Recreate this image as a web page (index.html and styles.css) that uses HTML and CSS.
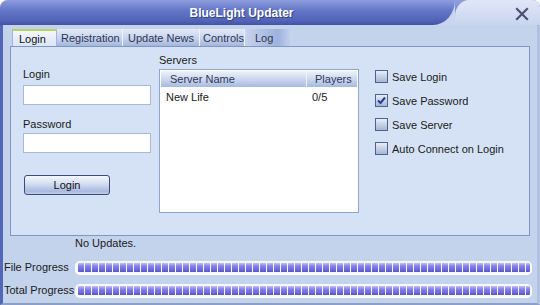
FILE: index.html
```html
<!DOCTYPE html>
<html lang="en">
<head>
  <meta charset="UTF-8">
  <meta name="viewport" content="width=device-width, initial-scale=1.0">
  <title>BlueLight Updater</title>
  <link rel="stylesheet" href="styles.css">
</head>
<body>
  <div class="window">
    <div class="titlebar">
      <div class="title">BlueLight Updater</div>
      <div class="caption">
        <div class="caption-inner">
          <span class="close">
            <svg width="14" height="14" viewBox="0 0 14 14">
              <path d="M2 2 L12 12 M12 2 L2 12" stroke="#4b5272" stroke-width="2.2" stroke-linecap="square" fill="none"/>
            </svg>
          </span>
        </div>
      </div>
    </div>

    <div class="frame">
      <div class="main">
        <div class="tabs">
          <span class="tab active">Login</span>
          <span class="tab tab-reg">Registration</span>
          <span class="tab tab-news">Update News</span>
          <span class="tab tab-ctrl">Controls</span>
          <span class="tab last">Log</span>
        </div>

        <div class="panel">
          <div class="col-login">
            <label class="lbl">Login</label>
            <input type="text" class="field">
            <label class="lbl lbl-pass">Password</label>
            <input type="password" class="field field-pass">
            <button class="btn">Login</button>
          </div>

          <div class="col-servers">
            <div class="lbl">Servers</div>
            <div class="list">
              <div class="list-head">
                <span class="c-name">Server Name</span>
                <span class="c-players">Players</span>
              </div>
              <div class="list-row">
                <span class="c-name">New Life</span>
                <span class="c-players">0/5</span>
              </div>
            </div>
          </div>

          <div class="col-options">
            <div class="opt"><span class="box"></span>Save Login</div>
            <div class="opt">
              <span class="box">
                <svg width="11" height="11" viewBox="0 0 11 11">
                  <path d="M2 5.5 L4.5 8 L9 2.5" stroke="#22418c" stroke-width="2" fill="none"/>
                </svg>
              </span>Save Password
            </div>
            <div class="opt"><span class="box"></span>Save Server</div>
            <div class="opt"><span class="box"></span>Auto Connect on Login</div>
          </div>
        </div>
      </div>

      <div class="status">No Updates.</div>

      <div class="progress">
        <div class="progress-row">
          <span class="p-label">File Progress</span>
          <div class="bar"><div class="fill"></div></div>
        </div>
        <div class="progress-row">
          <span class="p-label">Total Progress</span>
          <div class="bar"><div class="fill"></div></div>
        </div>
      </div>
    </div>
  </div>
</body>
</html>
```

FILE: styles.css
```css
* {
  box-sizing: border-box;
}

body {
  margin: 0;
  background: #fff;
  font-family: 'Liberation Sans', Arial, sans-serif;
  font-size: 11px;
  color: #1a1a1a;
}

.window {
  width: 540px;
  height: 305px;
  display: flex;
  flex-direction: column;
  background: #c4d3ec;
  border-radius: 8px 8px 0 0;
  overflow: hidden;
}

/* title bar */
.titlebar {
  display: flex;
  height: 25px;
  background: #c9d4ef;
}

.title {
  flex: 1;
  display: flex;
  align-items: center;
  justify-content: center;
  padding-left: 28px;
  background: linear-gradient(#8e9ddd, #6677c8 40%, #5062b7 85%, #42529f);
  border-bottom-right-radius: 22px 25px;
  color: #fff;
  font-weight: bold;
  font-size: 12px;
  text-shadow: 1px 1px 0 #33428c;
}

.caption {
  width: 85px;
  background: linear-gradient(#8e9ddd, #6677c8);
}

.caption-inner {
  height: 100%;
  display: flex;
  align-items: center;
  justify-content: flex-end;
  padding-right: 11px;
  background: linear-gradient(#e0e7f7, #c9d4ef);
  border-top-left-radius: 14px 16px;
}

.close {
  display: flex;
  margin-top: 2px;
}

/* body */
.frame {
  flex: 1;
  display: flex;
  flex-direction: column;
  border-left: 3px solid #5367b8;
  border-right: 3px solid #b1c0e0;
  border-bottom: 2px solid #8c9fcb;
}

.main {
  padding: 4px 7px 0 7px;
}

.tabs {
  display: flex;
  height: 17px;
  padding-left: 2px;
}

.tab {
  display: flex;
  align-items: center;
  padding: 0 0 0 4px;
  background: linear-gradient(#e3eaf7, #c6d3ee 55%, #a3b6dd);
  border-right: 1px solid #eef2fa;
  color: #2c3550;
  white-space: nowrap;
  overflow: hidden;
}

.tab.active {
  width: 45px;
  padding-left: 6px;
  background: linear-gradient(#f3f6fc, #dbe5f6);
  border-top: 2px solid #b4d45c;
  border-left: 1px solid #a3b5d8;
  border-right: 1px solid #a3b5d8;
  color: #111;
}

.tab-reg {
  width: 66px;
}

.tab-news {
  width: 77px;
  padding-left: 5px;
}

.tab-ctrl {
  width: 45px;
  padding-left: 3px;
}

.tab.last {
  width: 47px;
  padding-left: 10px;
  border-right: 0;
  background: linear-gradient(to right, #c7d3ee, #9fb2dc 70%, #c9d5ef);
}

.panel {
  height: 190px;
  display: flex;
  background: #d5e2f5;
  border: 1px solid #7f97c2;
}

.lbl {
  display: block;
  line-height: 13px;
}

.col-login {
  width: 128px;
  margin-left: 12px;
  padding-top: 21px;
  display: flex;
  flex-direction: column;
  align-items: flex-start;
}

.field {
  width: 128px;
  height: 20px;
  margin: 4px 0 0;
  border: 1px solid #a9bad9;
  background: #fff;
}

.lbl-pass {
  margin-top: 13px;
}

.field-pass {
  margin-top: 2px;
}

.btn {
  width: 86px;
  height: 20px;
  margin: 22px 0 0 1px;
  padding: 0;
  border: 1px solid #3e4b78;
  border-radius: 3px;
  background: linear-gradient(#f4f7fc, #d3ddf1 45%, #a8b9e0 85%, #c2cfec);
  font-family: inherit;
  font-size: 11px;
  color: #111;
}

.col-servers {
  width: 200px;
  margin-left: 8px;
  padding-top: 7px;
}

.list {
  height: 144px;
  margin-top: 2px;
  padding: 1px;
  background: #fff;
  border: 1px solid #8fa6cc;
}

.list-head,
.list-row {
  display: flex;
}

.list-head {
  height: 16px;
  align-items: center;
  background: linear-gradient(#eef2fa, #c5d2ed 60%, #a6badf);
  color: #2e3954;
}

.c-name {
  flex: 1;
  padding-left: 9px;
}

.c-players {
  width: 51px;
  padding-left: 8px;
}

.list-head .c-players {
  border-left: 1px solid #eef2fa;
  height: 100%;
  display: flex;
  align-items: center;
}

.list-row {
  margin-top: 4px;
  line-height: 13px;
}

.list-row .c-name {
  padding-left: 5px;
}

.list-row .c-players {
  padding-left: 6px;
}

.col-options {
  margin-left: 16px;
  padding-top: 23px;
  display: flex;
  flex-direction: column;
  gap: 11px;
}

.opt {
  display: flex;
  align-items: center;
  gap: 4px;
  height: 13px;
}

.box {
  width: 13px;
  height: 13px;
  display: flex;
  align-items: center;
  justify-content: center;
  border: 1px solid #4a6391;
  background: linear-gradient(#e9eef7, #c3cee3 55%, #a9b7d3);
}

/* status and progress */
.status {
  padding-left: 72px;
  padding-top: 1px;
  line-height: 13px;
}

.progress {
  display: flex;
  flex-direction: column;
  gap: 9px;
  padding: 10px 5px 0 0;
}

.progress-row {
  display: flex;
  align-items: center;
  height: 14px;
}

.p-label {
  width: 72px;
  padding-left: 1px;
  white-space: nowrap;
}

.bar {
  flex: 1;
  height: 13px;
  padding: 2px 2px 2px 3px;
  background: #f6f8fc;
  border-radius: 5px;
  box-shadow: 0 1px 0 #fff;
}

.fill {
  height: 100%;
  background:
    repeating-linear-gradient(to right, transparent 0 6px, #f6f8fc 6px 7px),
    linear-gradient(#c3c0f7, #8682e8 35%, #6a66d6 80%, #5a55c4);
  border-radius: 1px;
}
```
